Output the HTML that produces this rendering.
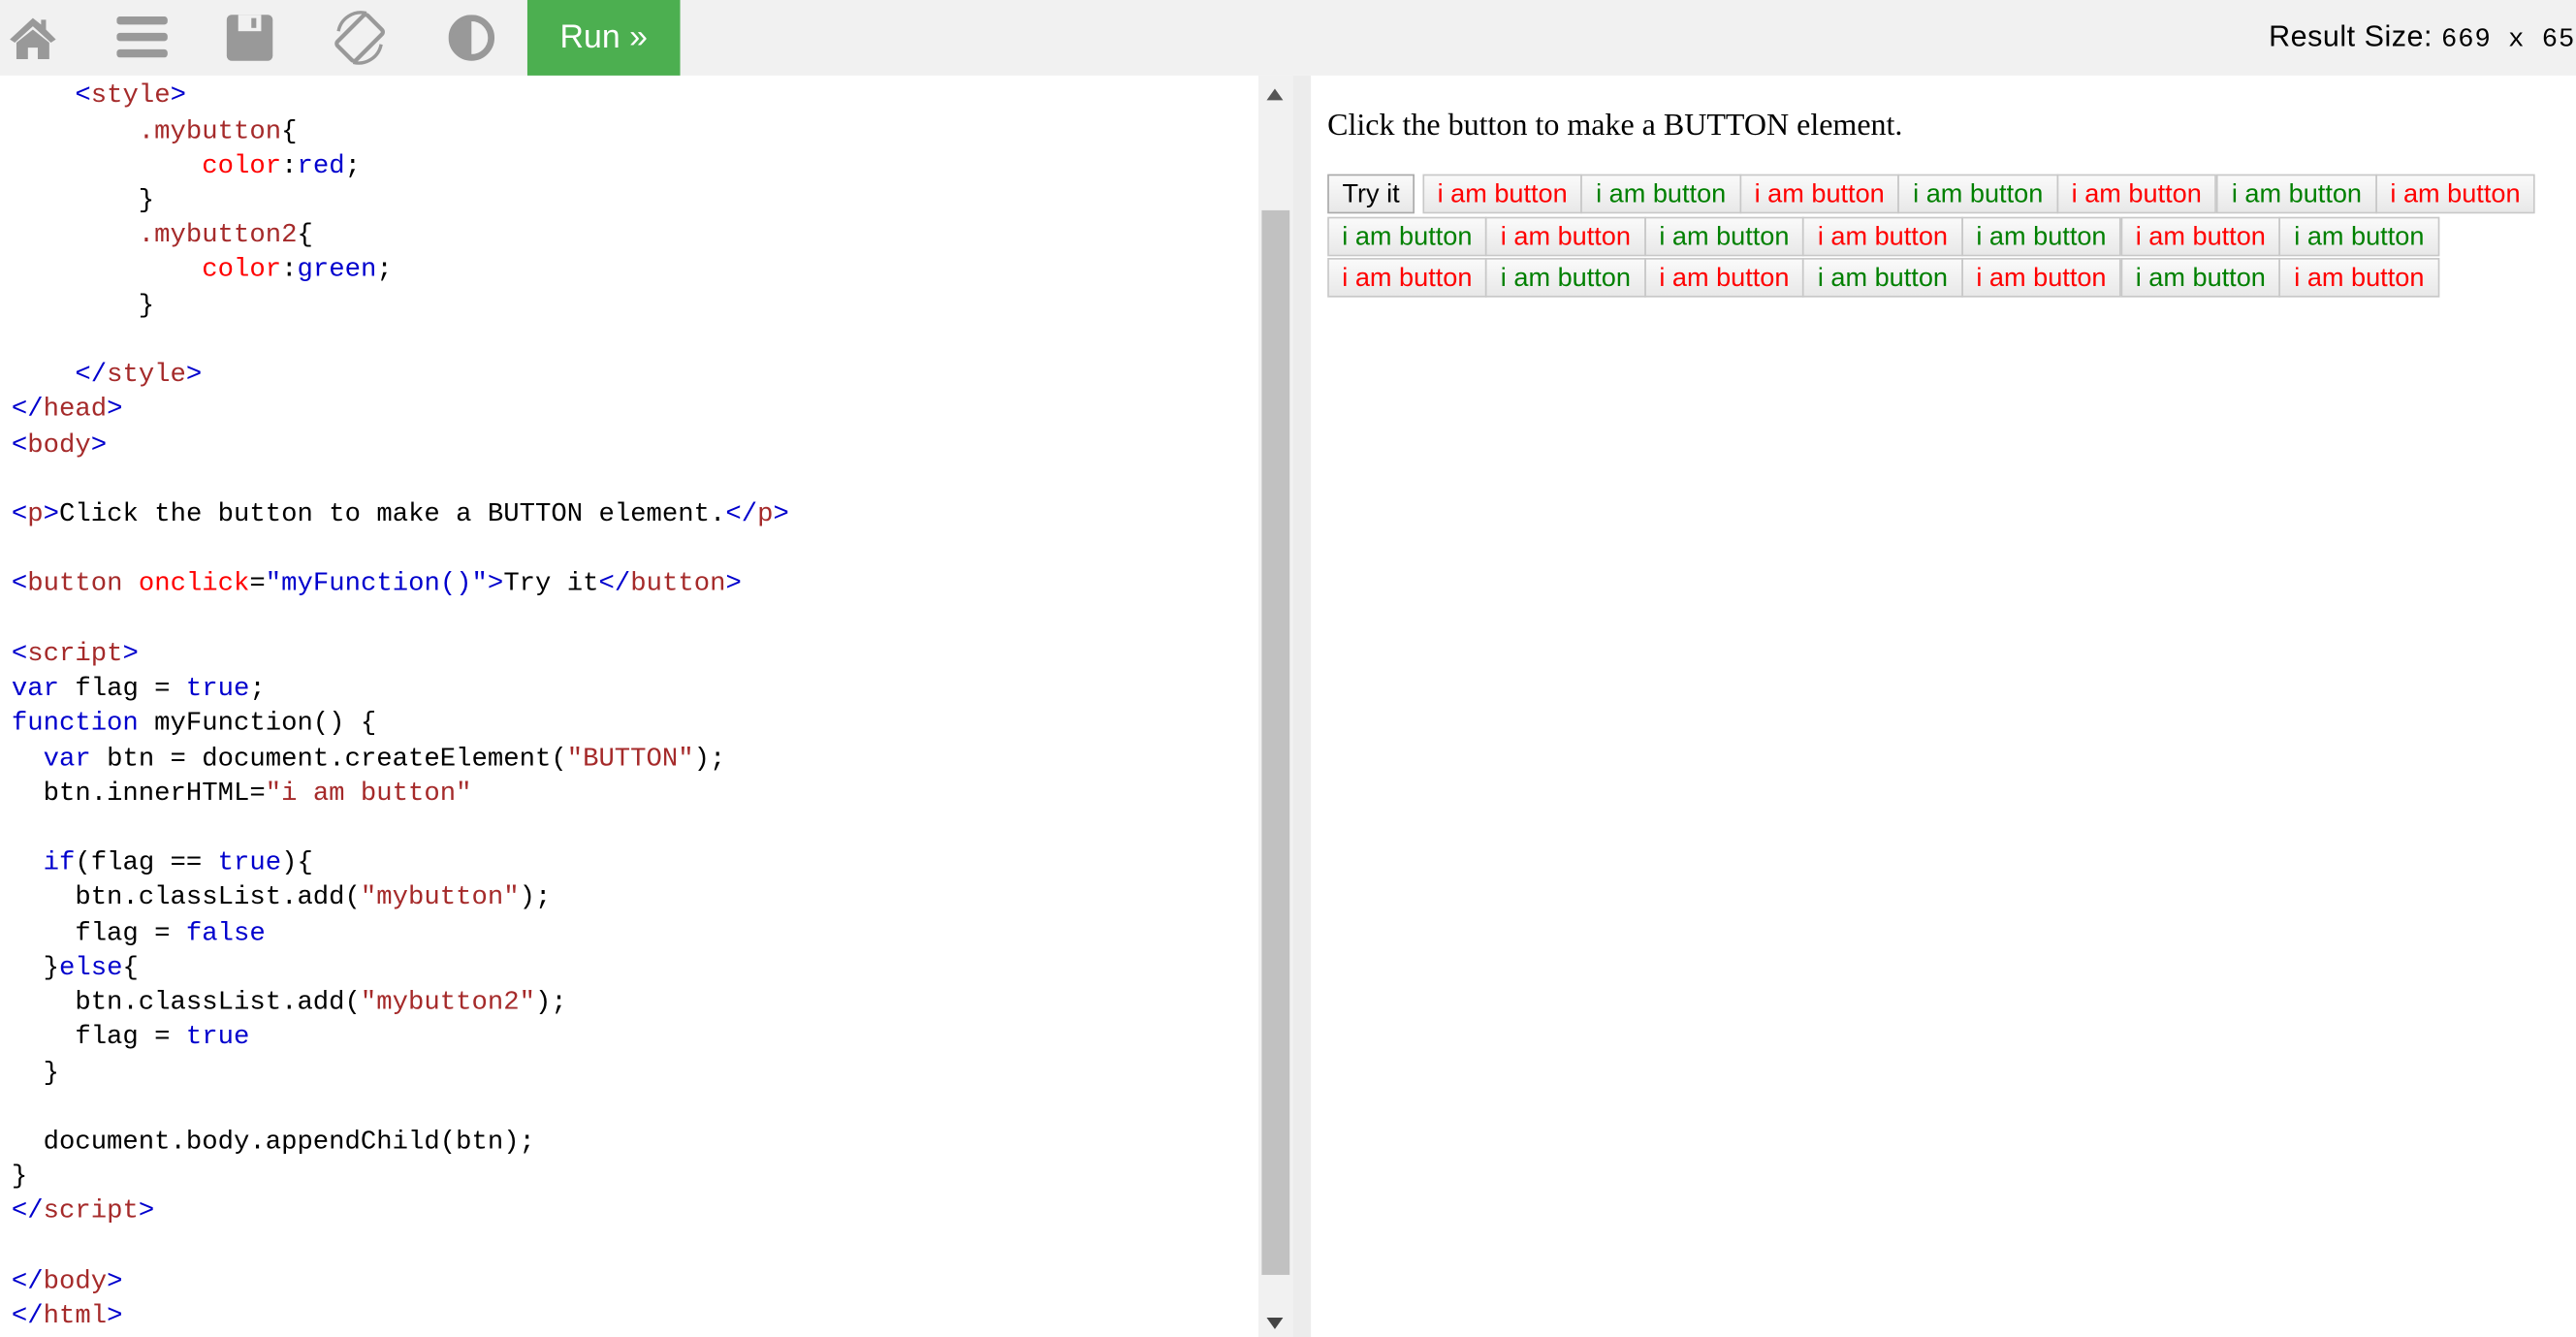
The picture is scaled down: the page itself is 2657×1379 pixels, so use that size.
<!DOCTYPE html>
<html><head><meta charset="utf-8"><style>
html,body{margin:0;padding:0;width:2657px;height:1379px;overflow:hidden;background:#fff}
#w{position:absolute;left:0;top:0;width:1568px;height:814px;transform:scale(1.69452);transform-origin:0 0;font-family:"Liberation Sans",sans-serif}
#tb{position:absolute;left:0;top:0;width:1568px;height:46px;background:#f1f1f1}
#run{position:absolute;left:321px;top:0;width:93px;height:46px;background:#4caf50;color:#fff;font-size:20px;line-height:46px;text-align:center}
#rs{position:absolute;left:1381px;top:12px;font-size:18px;color:#000;white-space:nowrap;letter-spacing:0.3px}
#rs span{font-family:"Liberation Mono",monospace;font-size:16px;letter-spacing:0.6px}
#code{position:absolute;left:0;top:46px;width:766px;height:768px;background:#fff;overflow:hidden}
#code pre{margin:0;position:absolute;left:7px;top:2.4px;font-family:"Liberation Mono",monospace;font-size:16.1px;line-height:21.22px;color:#000}
.t{color:#a52a2a}.b{color:#0000cd}.a{color:#f00}.k{color:#0000cd}.s{color:#a52a2a}
#sb{position:absolute;left:766px;top:46px;width:21px;height:768px;background:#f1f1f1}
#thumb{position:absolute;left:2px;top:82px;width:17px;height:648px;background:#c1c1c1}
#gap{position:absolute;left:787px;top:46px;width:11px;height:768px;background:#ececec}
#res{position:absolute;left:798px;top:46px;width:770px;height:768px;background:#fff}
#res p{position:absolute;left:10px;top:20px;margin:0;font-family:"Liberation Serif",serif;font-size:18.9px;color:#000}
.btn{position:absolute;height:24px;box-sizing:border-box;border:1px solid #c8c8c8;background:linear-gradient(#fafafa,#e8e8e8);font-size:16px;line-height:24px;text-align:center}
.r{color:#f00}.g{color:#008000}
</style></head><body><div id="w">
<div id="tb">
<svg style="position:absolute;left:4px;top:8px" width="32" height="30" viewBox="0 0 32 30"><path d="M16 3 L2 16 L5 18 L16 8 L27 18 L30 16 L24 10 V4 H21 V7 Z" fill="#999"/><path d="M6 18 L16 10 L26 18 V28 H19 V21 H13 V28 H6 Z" fill="#999"/></svg>
<svg style="position:absolute;left:71px;top:10px" width="32" height="26"><rect x="0" y="0" width="31" height="5" rx="2" fill="#999"/><rect x="0" y="10" width="31" height="5" rx="2" fill="#999"/><rect x="0" y="20" width="31" height="5" rx="2" fill="#999"/></svg>
<svg style="position:absolute;left:137px;top:8px" width="30" height="30"><rect x="1" y="1" width="28" height="28" rx="3" fill="#999"/><rect x="8" y="1" width="14" height="10" fill="#f1f1f1"/><rect x="16" y="3" width="3" height="6" fill="#999"/></svg>
<svg style="position:absolute;left:201px;top:5px" width="38" height="36" viewBox="0 0 38 36"><rect x="10" y="5" width="16" height="26" rx="2" transform="rotate(45 18 18)" fill="none" stroke="#999" stroke-width="2.5"/><path d="M5 14 A14 14 0 0 1 22 3" fill="none" stroke="#999" stroke-width="2"/><path d="M31 22 A14 14 0 0 1 14 33" fill="none" stroke="#999" stroke-width="2"/></svg>
<svg style="position:absolute;left:273px;top:9px" width="30" height="30"><circle cx="14" cy="14" r="12" fill="none" stroke="#999" stroke-width="4"/><path d="M14 2 A12 12 0 0 0 14 26 Z" fill="#999"/></svg>
<div id="run">Run »</div>
<div id="rs">Result Size: <span>669 x 657</span></div>
</div>
<div id="code"><pre>    <span class="b">&lt;</span><span class="t">style</span><span class="b">&gt;</span>
        <span class="t">.mybutton</span>{
            <span class="a">color</span>:<span class="k">red</span>;
        }
        <span class="t">.mybutton2</span>{
            <span class="a">color</span>:<span class="k">green</span>;
        }

    <span class="b">&lt;/</span><span class="t">style</span><span class="b">&gt;</span>
<span class="b">&lt;/</span><span class="t">head</span><span class="b">&gt;</span>
<span class="b">&lt;</span><span class="t">body</span><span class="b">&gt;</span>

<span class="b">&lt;</span><span class="t">p</span><span class="b">&gt;</span>Click the button to make a BUTTON element.<span class="b">&lt;/</span><span class="t">p</span><span class="b">&gt;</span>

<span class="b">&lt;</span><span class="t">button</span> <span class="a">onclick</span>=<span class="k">"myFunction()"</span><span class="b">&gt;</span>Try it<span class="b">&lt;/</span><span class="t">button</span><span class="b">&gt;</span>

<span class="b">&lt;</span><span class="t">script</span><span class="b">&gt;</span>
<span class="k">var</span> flag = <span class="k">true</span>;
<span class="k">function</span> myFunction() {
  <span class="k">var</span> btn = document.createElement(<span class="s">"BUTTON"</span>);
  btn.innerHTML=<span class="s">"i am button"</span>

  <span class="k">if</span>(flag == <span class="k">true</span>){
    btn.classList.add(<span class="s">"mybutton"</span>);
    flag = <span class="k">false</span>
  }<span class="k">else</span>{
    btn.classList.add(<span class="s">"mybutton2"</span>);
    flag = <span class="k">true</span>
  }

  document.body.appendChild(btn);
}
<span class="b">&lt;/</span><span class="t">script</span><span class="b">&gt;</span>

<span class="b">&lt;/</span><span class="t">body</span><span class="b">&gt;</span>
<span class="b">&lt;/</span><span class="t">html</span><span class="b">&gt;</span></pre></div>
<div id="sb"><div id="thumb"></div>
<svg style="position:absolute;left:5px;top:8px" width="10" height="8"><path d="M0 7 L5 0 L10 7 Z" fill="#555"/></svg>
<svg style="position:absolute;left:5px;top:756px" width="10" height="8"><path d="M0 0 L10 0 L5 7 Z" fill="#444"/></svg>
</div>
<div id="gap"></div>
<div id="res"><p>Click the button to make a BUTTON element.</p>
<div class="btn" style="left:10px;top:60px;width:53px;color:#000;border-color:#aaa">Try it</div>
<div class="btn r" style="left:68px;top:60px;width:97px">i am button</div>
<div class="btn g" style="left:164px;top:60px;width:98px">i am button</div>
<div class="btn r" style="left:261px;top:60px;width:97px">i am button</div>
<div class="btn g" style="left:357px;top:60px;width:98px">i am button</div>
<div class="btn r" style="left:454px;top:60px;width:97px">i am button</div>
<div class="btn g" style="left:551px;top:60px;width:98px">i am button</div>
<div class="btn r" style="left:648px;top:60px;width:97px">i am button</div>
<div class="btn g" style="left:10px;top:86px;width:97px">i am button</div>
<div class="btn r" style="left:106px;top:86px;width:98px">i am button</div>
<div class="btn g" style="left:203px;top:86px;width:97px">i am button</div>
<div class="btn r" style="left:299px;top:86px;width:98px">i am button</div>
<div class="btn g" style="left:396px;top:86px;width:97px">i am button</div>
<div class="btn r" style="left:493px;top:86px;width:97px">i am button</div>
<div class="btn g" style="left:589px;top:86px;width:98px">i am button</div>
<div class="btn r" style="left:10px;top:111px;width:97px">i am button</div>
<div class="btn g" style="left:106px;top:111px;width:98px">i am button</div>
<div class="btn r" style="left:203px;top:111px;width:97px">i am button</div>
<div class="btn g" style="left:299px;top:111px;width:98px">i am button</div>
<div class="btn r" style="left:396px;top:111px;width:97px">i am button</div>
<div class="btn g" style="left:493px;top:111px;width:97px">i am button</div>
<div class="btn r" style="left:589px;top:111px;width:98px">i am button</div>
</div>
</div></body></html>
